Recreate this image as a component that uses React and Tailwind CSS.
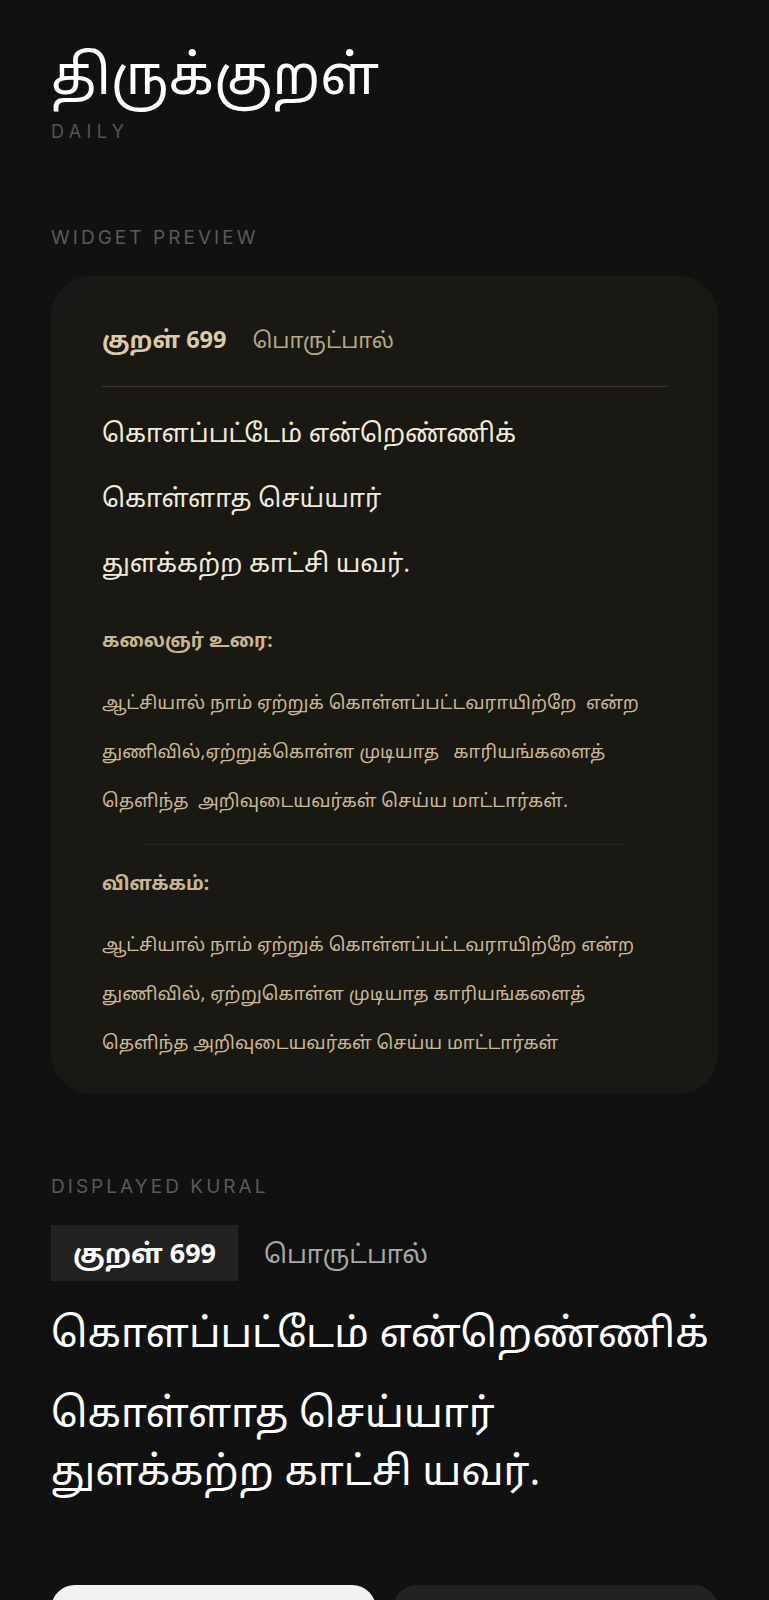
import React from "react";

export default function App() {
  return (
    <div className="h-[1600px] overflow-hidden bg-[#111111] px-[51px] pt-[40px] font-['Noto_Sans','Noto_Sans_Tamil',sans-serif]">
      <h1 className="text-[55px] leading-[66px] text-white font-normal">திருக்குறள்</h1>
      <div className="mt-[14px] text-[18px] leading-[24px] tracking-[0.3em] text-[#555555] font-['Inter',sans-serif]">
        DAILY
      </div>

      <div className="mt-[82px] text-[19px] leading-[24px] tracking-[0.16em] text-[#5a5a5a] font-['Inter',sans-serif]">
        WIDGET PREVIEW
      </div>

      <div className="mt-[26px] rounded-[40px] bg-[#1a1813] px-[51px] pt-[51px] pb-[28px]">
        <div className="flex items-baseline gap-[26px] pb-[35px] border-b border-[#3a362d]">
          <span className="text-[23.5px] leading-[24px] font-bold text-[#dccaa6]">குறள் 699</span>
          <span className="text-[22px] leading-[24px] text-[#b7a888]">பொருட்பால்</span>
        </div>
        <div className="mt-[13px] text-[25.5px] leading-[65px] text-[#f2ebdc]">
          <div>கொளப்பட்டேம் என்றெண்ணிக்</div>
          <div>கொள்ளாத செய்யார்</div>
          <div>துளக்கற்ற காட்சி யவர்.</div>
        </div>
        <div className="mt-[31px] text-[19px] font-bold text-[#c9b591]">கலைஞர் உரை:</div>
        <div className="mt-[22px] text-[18.5px] leading-[49px] text-[#cbb793]">
          <div>ஆட்சியால் நாம் ஏற்றுக் கொள்ளப்பட்டவராயிற்றே&nbsp; என்ற</div>
          <div>துணிவில்,ஏற்றுக்கொள்ள முடியாத&nbsp;&nbsp; காரியங்களைத்</div>
          <div>தெளிந்த&nbsp; அறிவுடையவர்கள் செய்ய மாட்டார்கள்.</div>
        </div>
        <div className="mx-[41px] mt-[20px] border-t border-[#26231d]" />
        <div className="mt-[24px] text-[19px] font-bold text-[#c9b591]">விளக்கம்:</div>
        <div className="mt-[22px] text-[18.5px] leading-[49px] text-[#cbb793]">
          <div>ஆட்சியால் நாம் ஏற்றுக் கொள்ளப்பட்டவராயிற்றே என்ற</div>
          <div>துணிவில், ஏற்றுகொள்ள முடியாத காரியங்களைத்</div>
          <div>தெளிந்த அறிவுடையவர்கள் செய்ய மாட்டார்கள்</div>
        </div>
      </div>

      <div className="mt-[81px] text-[19px] leading-[24px] tracking-[0.16em] text-[#5a5a5a] font-['Inter',sans-serif]">
        DISPLAYED KURAL
      </div>

      <div className="mt-[26px] flex items-center gap-[26px]">
        <span className="bg-[#222222] px-[22px] h-[56px] flex items-center text-[27px] font-bold text-white">
          குறள் 699
        </span>
        <span className="text-[25.5px] text-[#a8a8a8]">பொருட்பால்</span>
      </div>

      <div className="mt-[22px] text-[40.5px] leading-[58px] text-white">
        <div className="mb-[22px]">கொளப்பட்டேம் என்றெண்ணிக்</div>
        <div>கொள்ளாத செய்யார்</div>
        <div>துளக்கற்ற காட்சி யவர்.</div>
      </div>

      <div className="mt-[86px] grid grid-cols-2 gap-[17px]">
        <div className="h-[60px] rounded-[24px] bg-[#f2f2f2]" />
        <div className="h-[60px] rounded-[24px] bg-[#222222]" />
      </div>
    </div>
  );
}
